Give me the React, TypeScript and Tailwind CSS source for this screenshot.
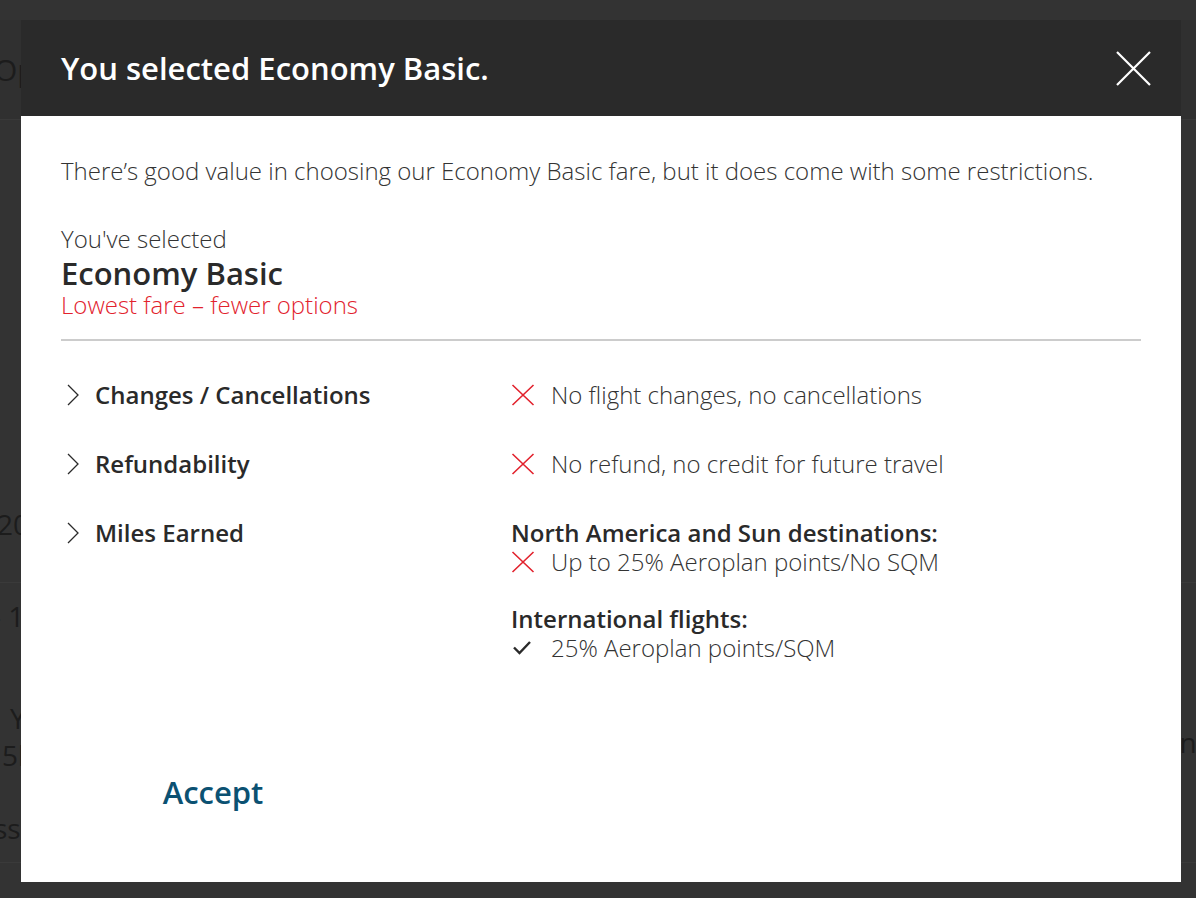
const font = { fontFamily: '"Open Sans", "Liberation Sans", sans-serif' };

function Cross() {
  return (
    <svg width="24" height="22" viewBox="0 0 24 22" className="shrink-0">
      <path d="M1.5 1 L22.5 21 M22.5 1 L1.5 21" stroke="#e2222d" strokeWidth="1.6" fill="none" />
    </svg>
  );
}

function Check() {
  return (
    <svg width="24" height="22" viewBox="0 0 24 22" className="shrink-0">
      <path d="M3 10.5 L8.5 16 L19 5" stroke="#2a2a2a" strokeWidth="2.4" fill="none" />
    </svg>
  );
}

function Chevron() {
  return (
    <svg width="14" height="22" viewBox="0 0 14 22" className="shrink-0">
      <path d="M2 1 L12 11 L2 21" stroke="#2a2a2a" strokeWidth="1.3" fill="none" />
    </svg>
  );
}

function CloseIcon() {
  return (
    <svg width="35" height="35" viewBox="0 0 35 35" className="shrink-0">
      <path d="M1 1 L34 34 M34 1 L1 34" stroke="#ffffff" strokeWidth="2.2" fill="none" />
    </svg>
  );
}

const ROWS = [
  { label: 'Changes / Cancellations', text: 'No flight changes, no cancellations' },
  { label: 'Refundability', text: 'No refund, no credit for future travel' },
];

export default function App() {
  return (
    <div className="relative w-[1196px] h-[898px] overflow-hidden bg-[#333333]" style={font}>
      {/* page behind the overlay */}
      <div className="flex flex-col text-[#1c1c1c] text-[28px]">
        <div className="h-[20px]" />
        <div className="h-[100px] bg-[#303030] border-b border-[#393939] flex items-center -ml-[6px] text-[30px]">Options</div>
        <div className="h-[379px]" />
        <div className="h-[50px] flex items-center -ml-[3px]">2024</div>
        <div className="h-[33px]" />
        <div className="h-px bg-[#3a3a3a]" />
        <div className="h-[66px] flex items-center -ml-[8px]">- 1</div>
        <div className="h-[51px]" />
        <div className="flex justify-between leading-[37px]">
          <div className="flex flex-col pl-[10px]">
            <span>Y</span>
            <span className="-ml-[8px]">5h</span>
          </div>
          <div className="pt-[24px] -mr-[14px]">nc</div>
        </div>
        <div className="h-[36px]" />
        <div className="leading-[37px] -ml-[6px]">ss</div>
        <div className="h-[15px]" />
        <div className="h-px bg-[#3a3a3a]" />
      </div>

      {/* modal */}
      <div className="absolute left-[21px] top-[20px] w-[1160px] h-[862px] bg-white flex flex-col">
        <div className="h-[96px] shrink-0 bg-[#2a2a2a] flex items-center justify-between pl-[40px] pr-[30px]">
          <h1 className="text-white text-[31px] font-semibold leading-none">You selected Economy Basic.</h1>
          <CloseIcon />
        </div>
        <div className="flex flex-col px-[40px] text-[#333333]">
          <p className="mt-[39px] text-[24px] leading-[32px] font-light">
            There’s good value in choosing our Economy Basic fare, but it does come with some restrictions.
          </p>
          <div className="mt-[37px] text-[24px] leading-[30px] font-light">You've selected</div>
          <div className="text-[31px] leading-[38px] font-semibold text-[#2a2a2a]">Economy Basic</div>
          <div className="text-[24px] leading-[26px] font-light text-[#e2222d]">Lowest fare – fewer options</div>
          <div className="mt-[21px] h-[2px] bg-[#cccccc]" />

          <div className="mt-[39px] flex flex-col gap-[40px]">
            {ROWS.map((r) => (
              <div key={r.label} className="flex items-center">
                <div className="w-[450px] flex items-center gap-[15px] pl-[5px]">
                  <Chevron />
                  <span className="text-[24px] leading-[29px] font-semibold text-[#2a2a2a]">{r.label}</span>
                </div>
                <div className="flex items-center gap-[16px]">
                  <Cross />
                  <span className="text-[24px] leading-[29px] font-light">{r.text}</span>
                </div>
              </div>
            ))}
            <div className="flex items-start">
              <div className="w-[450px] flex items-center gap-[15px] pl-[5px]">
                <Chevron />
                <span className="text-[24px] leading-[29px] font-semibold text-[#2a2a2a]">Miles Earned</span>
              </div>
              <div className="flex flex-col">
                <span className="text-[24px] leading-[29px] font-semibold text-[#2a2a2a]">North America and Sun destinations:</span>
                <div className="flex items-center gap-[16px]">
                  <Cross />
                  <span className="text-[24px] leading-[29px] font-light">Up to 25% Aeroplan points/No SQM</span>
                </div>
                <span className="mt-[28px] text-[24px] leading-[29px] font-semibold text-[#2a2a2a]">International flights:</span>
                <div className="flex items-center gap-[16px]">
                  <Check />
                  <span className="text-[24px] leading-[29px] font-light">25% Aeroplan points/SQM</span>
                </div>
              </div>
            </div>
          </div>

          <button className="mt-[100px] w-[304px] h-[60px] text-[31px] font-semibold text-[#0b5172]">Accept</button>
        </div>
      </div>
    </div>
  );
}
